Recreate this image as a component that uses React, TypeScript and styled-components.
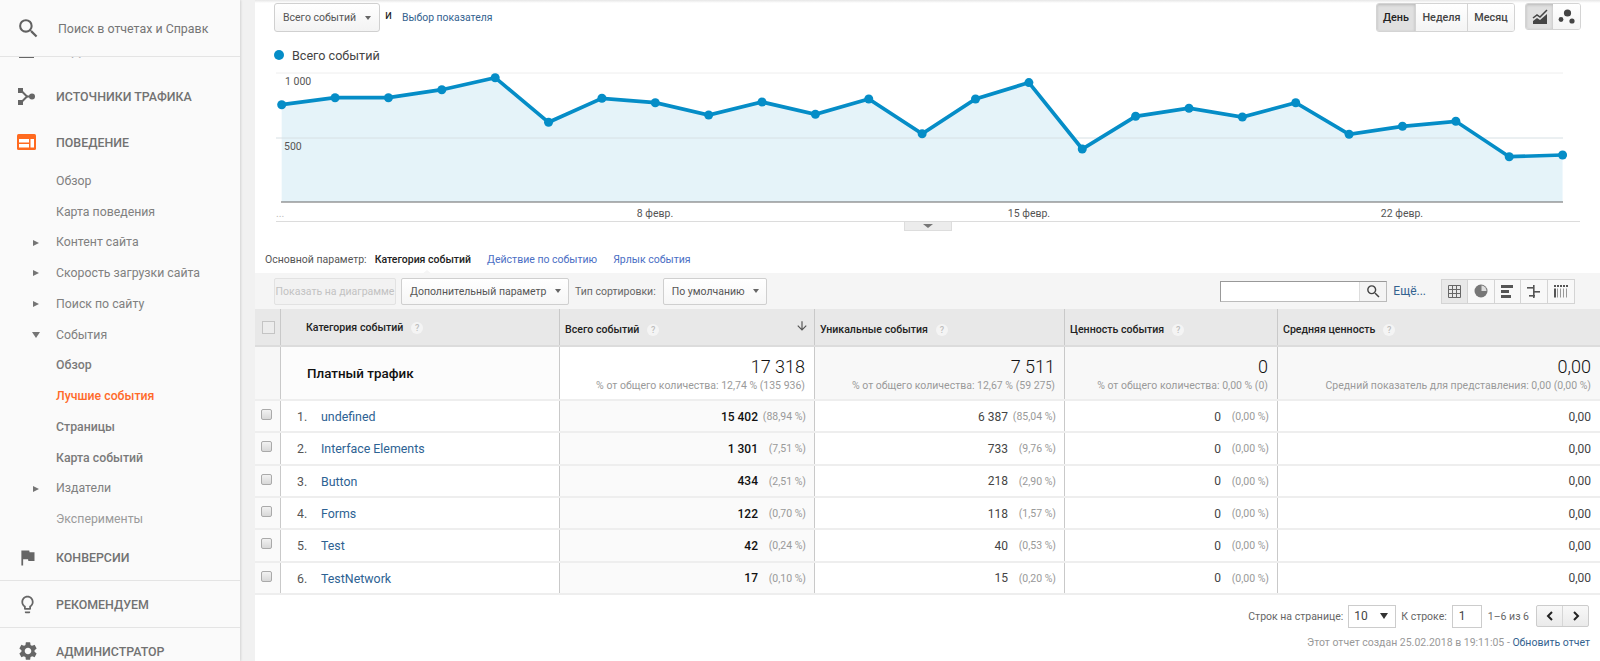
import React from "react";
import styled, { createGlobalStyle } from "styled-components";
import { MdSettings, MdLightbulbOutline, MdFlag, MdSearch, MdArrowDownward } from "react-icons/md";

const Global = createGlobalStyle`
  html, body { margin: 0; padding: 0; height: 661px; overflow: hidden; background: #fff; }
  body { font-family: Roboto, "Liberation Sans", sans-serif; font-size: 10.5px; color: #333; }
  * { box-sizing: border-box; }
`;

const Page = styled.div`
  display: flex;
  width: 1600px;
  height: 661px;
  overflow: hidden;
  position: relative;
`;

/* ---------- sidebar ---------- */
const Sidebar = styled.aside`
  width: 240px;
  flex: none;
  height: 661px;
  display: flex;
  flex-direction: column;
  background: #fafafa;
  overflow: hidden;
  box-shadow: 1px 0 2px rgba(0, 0, 0, 0.12);
  position: relative;
  z-index: 2;
`;
const SearchRow = styled.div`
  height: 57px;
  flex: none;
  display: flex;
  align-items: center;
  gap: 17px;
  padding-left: 16px;
  border-bottom: 1px solid #e4e4e4;
  background: #fafafa;
  color: #757575;
  font-size: 12.4px;
  position: relative;
  z-index: 1;
  svg { color: #616161; }
`;
const NavList = styled.nav`
  margin-top: -30px;
  display: flex;
  flex-direction: column;
`;
const NavRow = styled.div<{ $rule?: boolean }>`
  height: ${(p) => (p.$rule ? 47 : 46)}px;
  flex: none;
  display: flex;
  align-items: center;
  color: #727272;
  font-size: 12.4px;
  font-weight: 500;
  border-top: ${(p) => (p.$rule ? "1px solid #e4e4e4" : "none")};
`;
const NavIcon = styled.span`
  width: 56px;
  padding-left: 17px;
  flex: none;
  display: flex;
  align-items: center;
  color: #666;
`;
const SubRow = styled.div<{ $tone?: "active" | "strong" | "muted" }>`
  height: 30.75px;
  flex: none;
  display: flex;
  align-items: center;
  padding: 1px 0 0 56px;
  font-size: 12.3px;
  position: relative;
  font-weight: ${(p) => (p.$tone === "active" || p.$tone === "strong" ? 500 : 400)};
  color: ${(p) =>
    p.$tone === "active"
      ? "#ff6a2a"
      : p.$tone === "strong"
      ? "#7a7a7a"
      : p.$tone === "muted"
      ? "#9a9a9a"
      : "#808080"};
`;
const Caret = styled.span<{ $open?: boolean }>`
  position: absolute;
  left: 32px;
  top: 13px;
  width: 0;
  height: 0;
  ${(p) =>
    p.$open
      ? "border-left:4px solid transparent;border-right:4px solid transparent;border-top:6px solid #757575;"
      : "border-top:3.5px solid transparent;border-bottom:3.5px solid transparent;border-left:6px solid #757575;left:33px;"}
`;

const Gutter = styled.div`
  width: 15px;
  flex: none;
  background: #f1f1f1;
`;

/* ---------- main ---------- */
const Main = styled.main`
  flex: 1;
  min-width: 0;
  display: flex;
  flex-direction: column;
  position: relative;
  background: #fff;
  &::before {
    content: "";
    position: absolute;
    left: 0;
    right: 0;
    top: 0;
    height: 3px;
    background: linear-gradient(#e6e6e6, #fff);
  }
`;
const TopBar = styled.div`
  height: 40px;
  flex: none;
  display: flex;
  align-items: flex-start;
  padding: 3px 19px 0 19px;
`;
const TopSelect = styled.div`
  width: 106px;
  height: 29px;
  display: flex;
  align-items: center;
  justify-content: space-between;
  padding: 0 8px 0 8px;
  border: 1px solid #d0d0d0;
  border-radius: 3px;
  background: linear-gradient(#fff, #f3f3f3);
  color: #555;
  font-size: 10.5px;
`;
const DownTri = styled.i`
  width: 0;
  height: 0;
  border-left: 3.5px solid transparent;
  border-right: 3.5px solid transparent;
  border-top: 4px solid #666;
`;
const AndText = styled.span`
  margin: 5px 0 0 5px;
  font-size: 12px;
  color: #222;
`;
const MetricLink = styled.a`
  margin: 8px 0 0 10px;
  color: #33628f;
  font-size: 10.4px;
`;
const Spacer = styled.div`
  flex: 1;
`;
const EndPad = styled.div`
  flex: none;
  width: 25px;
`;
const Segmented = styled.div`
  display: flex;
  height: 29px;
  border: 1px solid #d4d4d4;
  border-radius: 3px;
  overflow: hidden;
  margin-right: 10px;
`;
const Segment = styled.div<{ $on?: boolean; $w: number }>`
  width: ${(p) => p.$w}px;
  display: flex;
  align-items: center;
  justify-content: center;
  font-size: 10.8px;
  font-weight: 500;
  color: ${(p) => (p.$on ? "#222" : "#444")};
  background: ${(p) => (p.$on ? "#e0e0e0" : "linear-gradient(#fff,#f4f4f4)")};
  border-right: 1px solid #d4d4d4;
  box-shadow: ${(p) => (p.$on ? "inset 0 1px 3px rgba(0,0,0,.18)" : "none")};
  &:last-child { border-right: none; }
`;
const ChartTypes = styled.div`
  display: flex;
  height: 27px;
  border: 1px solid #d4d4d4;
  border-radius: 3px;
  overflow: hidden;
`;
const ChartType = styled.div<{ $on?: boolean }>`
  width: 27px;
  display: flex;
  align-items: center;
  justify-content: center;
  background: ${(p) => (p.$on ? "#e0e0e0" : "linear-gradient(#fff,#f4f4f4)")};
  box-shadow: ${(p) => (p.$on ? "inset 0 1px 3px rgba(0,0,0,.18)" : "none")};
`;
const Legend = styled.div`
  height: 26px;
  flex: none;
  display: flex;
  align-items: center;
  gap: 8px;
  padding: 4px 0 0 19px;
  color: #444;
  font-size: 12.6px;
`;
const LegendDot = styled.i`
  width: 10px;
  height: 10px;
  border-radius: 50%;
  background: #058dc7;
`;
const ChartBox = styled.div`
  flex: none;
  height: 156px;
  svg { display: block; }
`;
const CollapseRow = styled.div`
  height: 9px;
  flex: none;
  display: flex;
  justify-content: center;
`;
const CollapseTab = styled.div`
  width: 48px;
  height: 9px;
  background: #ececec;
  border: 1px solid #ddd;
  border-top: none;
  display: flex;
  align-items: center;
  justify-content: center;
`;
const WideTri = styled.i`
  width: 0;
  height: 0;
  border-left: 5px solid transparent;
  border-right: 5px solid transparent;
  border-top: 4px solid #777;
`;
const DimRow = styled.div`
  height: 42px;
  flex: none;
  display: flex;
  align-items: center;
  padding: 14px 0 0 10px;
  font-size: 10.5px;
  color: #555;
`;
const DimLink = styled.a`
  margin-left: 16px;
  color: #4a6ec4;
`;
const DimActive = styled.b`
  margin-left: 8px;
  font-weight: 500;
  color: #222;
  position: relative;
  &::after {
    content: "";
    position: absolute;
    left: 46px;
    bottom: -9px;
    border-left: 6px solid transparent;
    border-right: 6px solid transparent;
    border-bottom: 5px solid #f5f5f5;
  }
`;
const Toolbar = styled.div`
  height: 36px;
  flex: none;
  background: #f5f5f5;
  display: flex;
  align-items: center;
  padding-left: 19px;
  font-size: 10.5px;
  color: #555;
`;
const ToolButton = styled.div<{ $w: number; $off?: boolean }>`
  width: ${(p) => p.$w}px;
  height: 27px;
  display: flex;
  align-items: center;
  justify-content: ${(p) => (p.$off ? "center" : "space-between")};
  padding: ${(p) => (p.$off ? "0" : "0 7px 0 8px")};
  border: 1px solid ${(p) => (p.$off ? "#e2e2e2" : "#cfcfcf")};
  border-radius: 2px;
  background: ${(p) => (p.$off ? "#f2f2f2" : "linear-gradient(#fff,#f6f6f6)")};
  color: ${(p) => (p.$off ? "#c2c2c2" : "#555")};
  white-space: nowrap;
  overflow: hidden;
  margin-right: ${(p) => (p.$off ? 5 : 0)}px;
`;
const SortLabel = styled.span`
  margin: 0 7px 0 6px;
  color: #666;
`;
const SearchBox = styled.div`
  width: 167px;
  height: 21px;
  display: flex;
  border: 1px solid #bbb;
  border-top-color: #999;
  border-left-color: #999;
  background: #fff;
`;
const SearchInput = styled.div`
  flex: 1;
`;
const SearchBtn = styled.div`
  width: 27px;
  display: flex;
  align-items: center;
  justify-content: center;
  background: #f4f4f4;
  border-left: 1px solid #ddd;
  color: #444;
`;
const MoreLink = styled.a`
  margin: 0 15px 0 6px;
  color: #33628f;
  font-size: 12px;
`;
const ViewGroup = styled.div`
  display: flex;
  height: 25px;
  border: 1px solid #d4d4d4;
  background: #f6f6f6;
`;
const ViewBtn = styled.div<{ $on?: boolean }>`
  width: 26.4px;
  display: flex;
  align-items: center;
  justify-content: center;
  border-right: 1px solid #d4d4d4;
  background: ${(p) => (p.$on ? "#e8e8e8" : "#f8f8f8")};
  &:last-child { border-right: none; }
`;

/* ---------- table ---------- */
const Grid = styled.div`
  flex: none;
`;
const GridRow = styled.div<{ $h: number; $rule?: string }>`
  display: grid;
  grid-template-columns: 26px 279px 255px 250px 213px 1fr;
  height: ${(p) => p.$h}px;
  border-bottom: 2px solid ${(p) => p.$rule || "#eeeeee"};
`;
const HeadCell = styled.div<{ $indent?: number; $lift?: boolean }>`
  background: #e8e8e8;
  border-right: 1px solid #c9c9c9;
  display: flex;
  align-items: center;
  gap: 8px;
  padding: ${(p) => (p.$lift ? "1px" : "5px")} 0 0 ${(p) => p.$indent ?? 5}px;
  font-size: 10.6px;
  font-weight: 500;
  color: #222;
  position: relative;
  &:last-child { border-right: none; }
`;
const HeadBox = styled(HeadCell)`
  padding: 0 0 0 7px;
`;
const EmptyCheck = styled.i`
  width: 13px;
  height: 13px;
  background: #ececec;
  border: 1px solid #c4c4c4;
`;
const Help = styled.i`
  width: 12px;
  height: 12px;
  border-radius: 50%;
  background: #f4f4f4;
  color: #bdbdbd;
  font-style: normal;
  font-size: 9px;
  font-weight: 500;
  display: flex;
  align-items: center;
  justify-content: center;
`;
const SortArrow = styled.span`
  position: absolute;
  right: 5px;
  top: 10px;
  color: #555;
  display: flex;
`;
const TotalFirst = styled.div`
  background: #f7f7f7;
  border-right: 1px solid #c9c9c9;
`;
const TotalName = styled.div`
  background: #fcfcfc;
  border-right: 1px solid #c9c9c9;
  display: flex;
  align-items: center;
  padding-left: 26px;
  font-size: 13.4px;
  font-weight: 500;
  color: #111;
`;
const TotalCell = styled.div<{ $sorted?: boolean }>`
  background: ${(p) => (p.$sorted ? "#fff" : "#f8f8f8")};
  border-right: 1px solid #c9c9c9;
  padding: 10px 9px 0 0;
  text-align: right;
  &:last-child { border-right: none; }
`;
const TotalValue = styled.div`
  font-size: 18px;
  font-weight: 300;
  line-height: 20px;
  color: #111;
`;
const TotalNote = styled.div`
  margin-top: 3px;
  font-size: 10.5px;
  line-height: 12px;
  color: #9a9a9a;
  white-space: nowrap;
`;
const CheckCell = styled.div`
  background: #fafafa;
  border-right: 1px solid #c9c9c9;
  padding: 8px 0 0 6px;
`;
const RowCheck = styled.i`
  display: block;
  width: 11px;
  height: 11px;
  border-radius: 2px;
  background: linear-gradient(#f2f2f2, #d8d8d8);
  border: 1px solid #aaa;
`;
const NameCell = styled.div`
  background: #fff;
  border-right: 1px solid #c9c9c9;
  display: flex;
  align-items: center;
  padding-top: 1px;
  font-size: 12.4px;
`;
const RowNum = styled.span`
  width: 40px;
  padding-left: 16px;
  color: #555;
`;
const RowLink = styled.a`
  color: #2d6293;
`;
const ValCell = styled.div<{ $sorted?: boolean }>`
  background: ${(p) => (p.$sorted ? "#fafafa" : "#fff")};
  border-right: 1px solid #c9c9c9;
  display: flex;
  align-items: center;
  justify-content: flex-end;
  padding: 1px 8px 0 0;
  font-size: 12px;
  color: ${(p) => (p.$sorted ? "#111" : "#444")};
  font-weight: ${(p) => (p.$sorted ? 500 : 400)};
  &:last-child { border-right: none; padding-right: 9px; }
`;
const Pct = styled.span`
  width: 48px;
  text-align: right;
  font-size: 10.5px;
  font-weight: 400;
  color: #999;
  white-space: nowrap;
`;

/* ---------- pagination ---------- */
const Pager = styled.div`
  height: 34px;
  flex: none;
  display: flex;
  align-items: center;
  justify-content: flex-end;
  padding: 9px 11px 0 0;
  color: #666;
  font-size: 10.5px;
`;
const PageSelect = styled.div`
  width: 48px;
  height: 23px;
  margin: 0 5px;
  border: 1px solid #ccc;
  background: #fff;
  display: flex;
  align-items: center;
  justify-content: space-between;
  padding: 0 7px 0 5px;
  font-size: 12px;
  color: #444;
`;
const BlackTri = styled.i`
  width: 0;
  height: 0;
  border-left: 4px solid transparent;
  border-right: 4px solid transparent;
  border-top: 6px solid #333;
`;
const PageInput = styled.div`
  width: 30px;
  height: 23px;
  margin: 0 6px 0 5px;
  border: 1px solid #ccc;
  background: #fff;
  display: flex;
  align-items: center;
  padding-left: 6px;
  font-size: 12px;
  color: #444;
`;
const PageBtns = styled.div`
  display: flex;
  width: 53px;
  height: 22px;
  margin-left: 7px;
  border: 1px solid #ccc;
  border-radius: 2px;
  background: linear-gradient(#f8f8f8, #eaeaea);
`;
const PageBtn = styled.div`
  flex: 1;
  display: flex;
  align-items: center;
  justify-content: center;
  border-right: 1px solid #d6d6d6;
  &:last-child { border-right: none; }
`;
const Footer = styled.div`
  flex: none;
  padding: 7px 10px 0 0;
  text-align: right;
  color: #999;
  font-size: 10.5px;
  line-height: 14px;
`;
const FooterLink = styled.a`
  color: #33628f;
`;

/* ---------- data ---------- */
const ys = [104.7, 97.7, 97.7, 89.7, 77.7, 122.3, 98.3, 102.7, 115, 102, 114.3, 99, 133.7, 99, 82.6, 149, 116.3, 108.2, 117, 102.7, 134.3, 126.3, 121.3, 156.7, 155];
const pts = ys.map((y, i) => [281.7 + i * 53.37, y] as const);
const line = pts.map(([x, y]) => `${x},${y}`).join(" ");
const area = `281.7,202 ${line} ${pts[24][0]},202`;

const rows = [
  ["undefined", "15 402", "(88,94 %)", "6 387", "(85,04 %)"],
  ["Interface Elements", "1 301", "(7,51 %)", "733", "(9,76 %)"],
  ["Button", "434", "(2,51 %)", "218", "(2,90 %)"],
  ["Forms", "122", "(0,70 %)", "118", "(1,57 %)"],
  ["Test", "42", "(0,24 %)", "40", "(0,53 %)"],
  ["TestNetwork", "17", "(0,10 %)", "15", "(0,20 %)"],
];

const TrafficIcon = () => (
  <svg width="19" height="19" viewBox="0 0 19 19" fill="#666">
    <rect x="1" y="1" width="5" height="5" />
    <rect x="1" y="13" width="5" height="5" />
    <circle cx="15" cy="9.5" r="3" />
    <path d="M4 3.5l6 6-6 6" fill="none" stroke="#666" strokeWidth="2" />
    <path d="M9 9.5h5" stroke="#666" strokeWidth="2" />
  </svg>
);
const BehaviorIcon = () => (
  <svg width="19" height="16" viewBox="0 0 19 16">
    <rect width="19" height="16" rx="1.5" fill="#ff6a1f" />
    <rect x="2" y="5" width="10" height="3.5" fill="#fff" />
    <rect x="2" y="10" width="10" height="3.5" fill="#fff" />
    <rect x="13.5" y="5" width="3.5" height="8.5" fill="#fff" />
  </svg>
);
const ChartIcon = () => (
  <svg width="16" height="16" viewBox="0 0 16 16" fill="#444">
    <path d="M1 9l4-3 3 2 7-7" fill="none" stroke="#444" strokeWidth="1.5" />
    <path d="M1 15v-3l4-3 3 2 7-6v10z" />
  </svg>
);
const MotionIcon = () => (
  <svg width="17" height="16" viewBox="0 0 17 16" fill="#444">
    <circle cx="9.5" cy="4" r="3.6" />
    <circle cx="3" cy="10.5" r="2.4" />
    <circle cx="14" cy="12" r="2.6" />
  </svg>
);
const GridIcon = () => (
  <svg width="13" height="13" viewBox="0 0 13 13" fill="none" stroke="#666">
    <path d="M.5.5h12v12H.5zM4.5.5v12M8.5.5v12M.5 4.5h12M.5 8.5h12" />
  </svg>
);
const PieIcon = () => (
  <svg width="14" height="14" viewBox="0 0 14 14">
    <circle cx="7" cy="7" r="6.5" fill="#777" />
    <path d="M7.5 1.5a5.5 5.5 0 0 1 5 5.5h-5z" fill="#ddd" />
  </svg>
);
const BarsIcon = () => (
  <svg width="13" height="13" viewBox="0 0 13 13" fill="#555">
    <rect width="12" height="3" />
    <rect y="5" width="8" height="3" />
    <rect y="10" width="10" height="3" />
  </svg>
);
const CompareIcon = () => (
  <svg width="13" height="13" viewBox="0 0 13 13" fill="#555">
    <rect y="2" width="7" height="1.6" />
    <rect x="6" y="6" width="7" height="1.6" />
    <rect x="2" y="10" width="6" height="1.6" />
    <rect x="6" y="0" width="1.6" height="13" />
  </svg>
);
const PivotIcon = () => (
  <svg width="14" height="13" viewBox="0 0 14 13" fill="#999">
    {[0, 3, 6, 9, 12].map((x, i) => (
      <React.Fragment key={x}>
        <rect x={x} y="0" width="2" height="2" fill="#555" />
        <rect x={x} y="3.5" width={i === 0 ? 2 : 1} height="9" fill={i === 0 ? "#555" : "#999"} />
      </React.Fragment>
    ))}
  </svg>
);
const Chevron = ({ left }: { left?: boolean }) => (
  <svg width="8" height="10" viewBox="0 0 8 10" fill="none" stroke="#222" strokeWidth="2">
    <path d={left ? "M6 1L2 5l4 4" : "M2 1l4 4-4 4"} />
  </svg>
);

export default function App() {
  return (
    <Page>
      <Global />
      <Sidebar>
        <SearchRow>
          <MdSearch size={25} />
          <span>Поиск в отчетах и Справк</span>
        </SearchRow>
        <NavList>
          <NavRow>
            <NavIcon>
              <svg width="19" height="16" viewBox="0 0 19 16" fill="#666"><rect x="2" width="15" height="16" /></svg>
            </NavIcon>
            АУДИТОРИЯ
          </NavRow>
          <NavRow>
            <NavIcon><TrafficIcon /></NavIcon>
            ИСТОЧНИКИ ТРАФИКА
          </NavRow>
          <NavRow>
            <NavIcon><BehaviorIcon /></NavIcon>
            ПОВЕДЕНИЕ
          </NavRow>
          <SubRow>Обзор</SubRow>
          <SubRow>Карта поведения</SubRow>
          <SubRow><Caret />Контент сайта</SubRow>
          <SubRow><Caret />Скорость загрузки сайта</SubRow>
          <SubRow><Caret />Поиск по сайту</SubRow>
          <SubRow><Caret $open />События</SubRow>
          <SubRow $tone="strong">Обзор</SubRow>
          <SubRow $tone="active">Лучшие события</SubRow>
          <SubRow $tone="strong">Страницы</SubRow>
          <SubRow $tone="strong">Карта событий</SubRow>
          <SubRow><Caret />Издатели</SubRow>
          <SubRow $tone="muted">Эксперименты</SubRow>
          <NavRow>
            <NavIcon><MdFlag size={21} /></NavIcon>
            КОНВЕРСИИ
          </NavRow>
          <NavRow $rule>
            <NavIcon><MdLightbulbOutline size={21} /></NavIcon>
            РЕКОМЕНДУЕМ
          </NavRow>
          <NavRow $rule>
            <NavIcon><MdSettings size={22} /></NavIcon>
            АДМИНИСТРАТОР
          </NavRow>
        </NavList>
      </Sidebar>
      <Gutter />
      <Main>
        <TopBar>
          <TopSelect>Всего событий<DownTri /></TopSelect>
          <AndText>и</AndText>
          <MetricLink>Выбор показателя</MetricLink>
          <Spacer />
          <Segmented>
            <Segment $on $w={39}>День</Segment>
            <Segment $w={52}>Неделя</Segment>
            <Segment $w={46}>Месяц</Segment>
          </Segmented>
          <ChartTypes>
            <ChartType $on><ChartIcon /></ChartType>
            <ChartType><MotionIcon /></ChartType>
          </ChartTypes>
        </TopBar>
        <Legend><LegendDot />Всего событий</Legend>
        <ChartBox>
          <svg width="1345" height="156" viewBox="255 66 1345 156">
            <path d="M276 73H1563M276 138H1563" stroke="#eeeeee" />
            <polygon points={area} fill="#058dc7" fillOpacity="0.105" />
            <path d="M276 138H1563" stroke="#dfe8ec" />
            <path d="M281 202H1563" stroke="#666" strokeWidth="1" />
            <polyline points={line} fill="none" stroke="#058dc7" strokeWidth="3.7" />
            {pts.map(([x, y]) => (
              <circle key={x} cx={x} cy={y} r="4.5" fill="#058dc7" />
            ))}
            <g fontSize="10.5" fontFamily="Roboto, sans-serif" fill="#555">
              <text x="285" y="85">1 000</text>
              <text x="284" y="150">500</text>
              <text x="276" y="217" fill="#bbb">...</text>
              <text x="655" y="217" textAnchor="middle">8 февр.</text>
              <text x="1029" y="217" textAnchor="middle">15 февр.</text>
              <text x="1402" y="217" textAnchor="middle">22 февр.</text>
            </g>
            <path d="M276 221.5H1580" stroke="#dcdcdc" />
          </svg>
        </ChartBox>
        <CollapseRow><CollapseTab><WideTri /></CollapseTab></CollapseRow>
        <DimRow>
          Основной параметр:
          <DimActive>Категория событий</DimActive>
          <DimLink>Действие по событию</DimLink>
          <DimLink>Ярлык события</DimLink>
        </DimRow>
        <Toolbar>
          <ToolButton $off $w={122}>Показать на диаграмме</ToolButton>
          <ToolButton $w={168}>Дополнительный параметр<DownTri /></ToolButton>
          <SortLabel>Тип сортировки:</SortLabel>
          <ToolButton $w={104}>По умолчанию<DownTri /></ToolButton>
          <Spacer />
          <SearchBox>
            <SearchInput />
            <SearchBtn><MdSearch size={17} /></SearchBtn>
          </SearchBox>
          <MoreLink>Ещё...</MoreLink>
          <ViewGroup>
            <ViewBtn $on><GridIcon /></ViewBtn>
            <ViewBtn><PieIcon /></ViewBtn>
            <ViewBtn><BarsIcon /></ViewBtn>
            <ViewBtn><CompareIcon /></ViewBtn>
            <ViewBtn><PivotIcon /></ViewBtn>
          </ViewGroup>
          <EndPad />
        </Toolbar>
        <Grid>
          <GridRow $h={38} $rule="#dcdcdc">
            <HeadBox><EmptyCheck /></HeadBox>
            <HeadCell $indent={25} $lift>Категория событий<Help>?</Help></HeadCell>
            <HeadCell>Всего событий<Help>?</Help><SortArrow><MdArrowDownward size={14} /></SortArrow></HeadCell>
            <HeadCell>Уникальные события<Help>?</Help></HeadCell>
            <HeadCell>Ценность события<Help>?</Help></HeadCell>
            <HeadCell>Средняя ценность<Help>?</Help></HeadCell>
          </GridRow>
          <GridRow $h={54}>
            <TotalFirst />
            <TotalName>Платный трафик</TotalName>
            <TotalCell $sorted><TotalValue>17 318</TotalValue><TotalNote>% от общего количества: 12,74 % (135 936)</TotalNote></TotalCell>
            <TotalCell><TotalValue>7 511</TotalValue><TotalNote>% от общего количества: 12,67 % (59 275)</TotalNote></TotalCell>
            <TotalCell><TotalValue>0</TotalValue><TotalNote>% от общего количества: 0,00 % (0)</TotalNote></TotalCell>
            <TotalCell><TotalValue>0,00</TotalValue><TotalNote>Средний показатель для представления: 0,00 (0,00 %)</TotalNote></TotalCell>
          </GridRow>
          {rows.map((r, i) => (
            <GridRow key={r[0]} $h={32.33}>
              <CheckCell><RowCheck /></CheckCell>
              <NameCell><RowNum>{i + 1}.</RowNum><RowLink>{r[0]}</RowLink></NameCell>
              <ValCell $sorted>{r[1]}<Pct>{r[2]}</Pct></ValCell>
              <ValCell>{r[3]}<Pct>{r[4]}</Pct></ValCell>
              <ValCell>0<Pct>(0,00 %)</Pct></ValCell>
              <ValCell>0,00</ValCell>
            </GridRow>
          ))}
        </Grid>
        <Pager>
          Строк на странице:
          <PageSelect>10<BlackTri /></PageSelect>
          К строке:
          <PageInput>1</PageInput>
          1–6 из 6
          <PageBtns>
            <PageBtn><Chevron left /></PageBtn>
            <PageBtn><Chevron /></PageBtn>
          </PageBtns>
        </Pager>
        <Footer>
          Этот отчет создан 25.02.2018 в 19:11:05 - <FooterLink>Обновить отчет</FooterLink>
        </Footer>
      </Main>
    </Page>
  );
}
